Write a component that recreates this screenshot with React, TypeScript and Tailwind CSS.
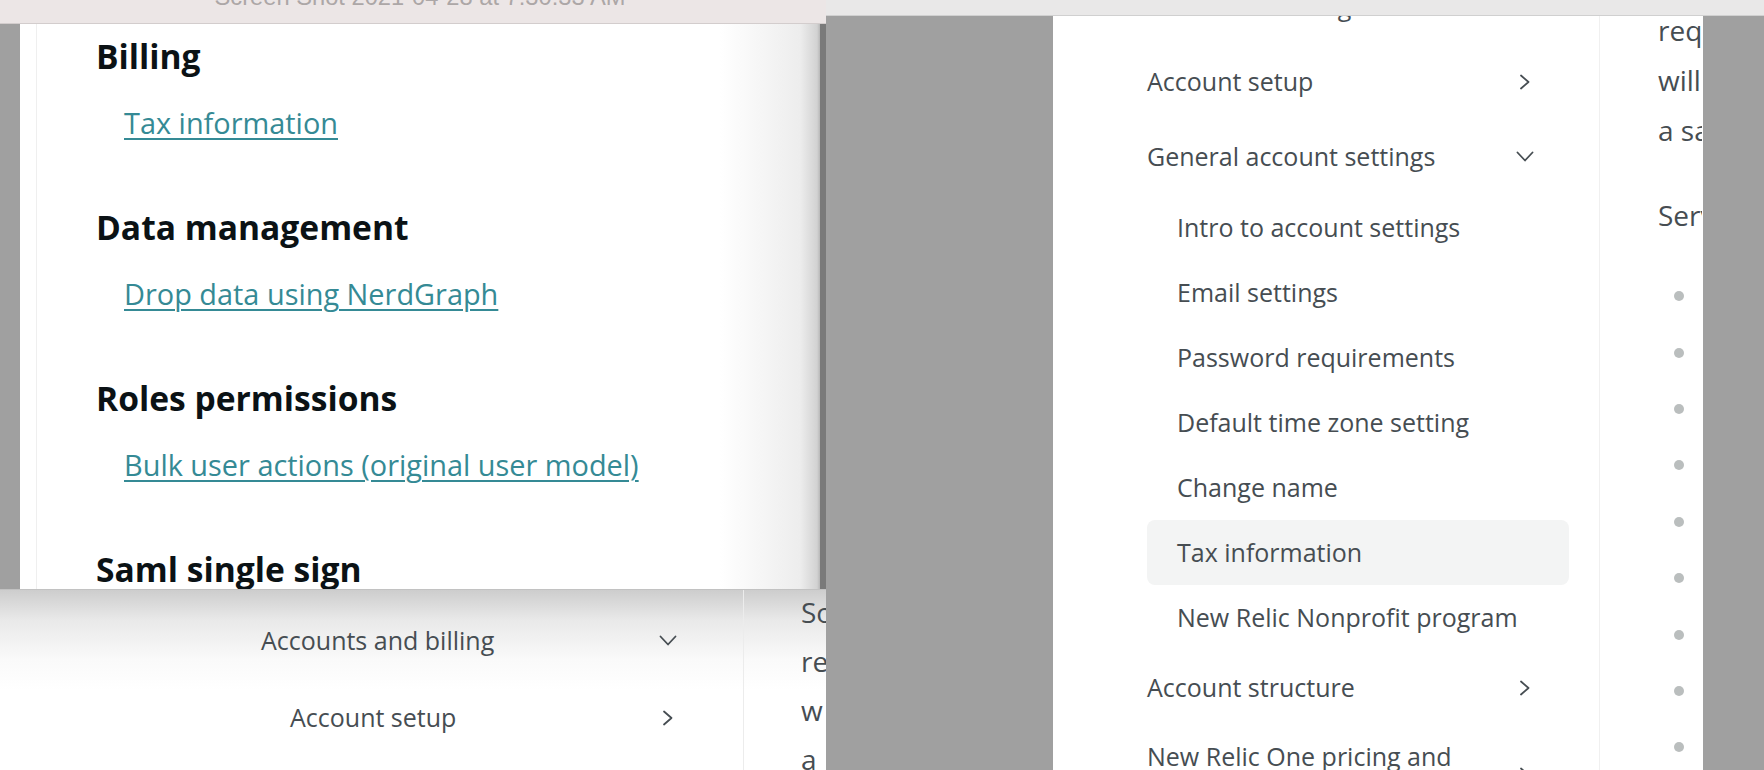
import React from "react";

const navText = "text-[25px] text-[#464d52]";
const bodyText = "text-[28px] text-[#464d52]";

function ChevronRight() {
  return (
    <svg width="12" height="16" viewBox="0 0 12 16" fill="none">
      <polyline points="2,1.5 9.5,8 2,14.5" stroke="#464d52" strokeWidth="1.8" strokeLinecap="round" strokeLinejoin="round" />
    </svg>
  );
}

function ChevronDown() {
  return (
    <svg width="18" height="11" viewBox="0 0 18 11" fill="none">
      <polyline points="1.5,1.5 9,9.5 16.5,1.5" stroke="#464d52" strokeWidth="1.8" strokeLinecap="round" strokeLinejoin="round" />
    </svg>
  );
}

function TopRow({ label, open, h = "h-[75px]" }: { label: string; open?: boolean; h?: string }) {
  return (
    <div className={`${h} flex items-center justify-between`}>
      <span className={`${navText} whitespace-nowrap`}>{label}</span>
      <span className="w-[18px] mr-[35px] flex justify-center">{open ? <ChevronDown /> : <ChevronRight />}</span>
    </div>
  );
}

function SubRow({ label, active }: { label: string; active?: boolean }) {
  return (
    <div className={`h-[65px] flex items-center pl-[30px] rounded-[8px] ${active ? "bg-[#f3f4f4]" : ""}`}>
      <span className={`${navText} whitespace-nowrap`}>{label}</span>
    </div>
  );
}

function Heading({ children, first }: { children: React.ReactNode; first?: boolean }) {
  return (
    <div className={`${first ? "" : "mt-[62px]"} text-[33.6px] leading-[44px] font-bold text-[#0b1215] whitespace-nowrap`}>{children}</div>
  );
}

function DocLink({ children }: { children: React.ReactNode }) {
  return (
    <div className="mt-[25px] pl-[28px] text-[28.9px] leading-[40px] whitespace-nowrap">
      <span className="text-[#358a95] underline decoration-[1.5px] underline-offset-[4px]">{children}</span>
    </div>
  );
}

export default function App() {
  const bullets = Array.from({ length: 9 });
  return (
    <div className="w-[1764px] h-[770px] flex bg-[#a0a0a0] overflow-hidden font-['Open_Sans',sans-serif]">
      {/* Left column */}
      <div className="w-[826px] h-full flex flex-col">
        {/* Left window */}
        <div className="h-[590px] flex flex-col border-b border-[#c2c2c2]">
          <div className="h-[24px] shrink-0 bg-[#ece6e6] border-b border-[#d3cdcd] overflow-hidden flex justify-center pl-[14px]">
            <div className="-mt-[15px] text-[23.7px] leading-[24px] text-[#aca7a7] font-['Liberation_Sans',Arial,sans-serif] whitespace-nowrap">
              Screen Shot 2021-04-28 at 7:30:33 AM
            </div>
          </div>
          <div className="flex-1 flex min-h-0">
            <div className="w-[20px] bg-[#a0a0a0]" />
            <div className="w-[800px] h-full bg-[linear-gradient(to_right,#ffffff_0px,#ffffff_700px,#ededed_780px,#d2d2d2_797px,#b8b8b8_800px)] overflow-hidden">
              <div className="ml-[16px] h-full border-l border-[#efefef] pl-[59px] pt-[10px]">
                <Heading first>Billing</Heading>
                <DocLink>Tax information</DocLink>
                <Heading>Data management</Heading>
                <DocLink>Drop data using NerdGraph</DocLink>
                <Heading>Roles permissions</Heading>
                <DocLink>Bulk user actions (original user model)</DocLink>
                <Heading>Saml single sign</Heading>
              </div>
            </div>
            <div className="w-[6px] bg-[#7a7a7a]" />
          </div>
        </div>
        {/* Page fragment below left window */}
        <div className="flex-1 flex bg-[linear-gradient(to_bottom,#cdcdcd_0px,#e9e9e9_30px,#fafafa_70px,#ffffff_100px)] overflow-hidden">
          <div className="w-[744px] border-r border-[#ececec] pl-[261px] pr-[31px] pt-[12px]">
            <TopRow label="Accounts and billing" open h="h-[77px]" />
            <div className="pl-[29px]">
              <TopRow label="Account setup" h="h-[77px]" />
            </div>
          </div>
          <div className="flex-1 pl-[57px] -mt-[2px] overflow-hidden">
            {["So", "re", "w", "a"].map((t) => (
              <div key={t} className={`${bodyText} leading-[49px] whitespace-nowrap`}>{t}</div>
            ))}
          </div>
        </div>
      </div>

      {/* Right window */}
      <div className="flex-1 h-full flex flex-col">
        <div className="h-[16px] shrink-0 bg-[#e9e8e8] border-b border-[#d0d0d0]" />
        <div className="flex-1 flex min-h-0">
          <div className="w-[227px] bg-[#a0a0a0]" />
          <div className="w-[650px] h-full bg-white flex overflow-hidden">
            <div className="w-[547px] h-full overflow-hidden pl-[65px] pr-[30px] border-r border-[#f0f0f0]">
              <div className="-mt-[47px]">
                <TopRow label="Accounts and billing" open />
                <div className="pl-[29px]">
                  <TopRow label="Account setup" />
                  <TopRow label="General account settings" open />
                  <div className="mt-[1px]">
                    <SubRow label="Intro to account settings" />
                    <SubRow label="Email settings" />
                    <SubRow label="Password requirements" />
                    <SubRow label="Default time zone setting" />
                    <SubRow label="Change name" />
                    <SubRow label="Tax information" active />
                    <SubRow label="New Relic Nonprofit program" />
                  </div>
                  <TopRow label="Account structure" />
                  <div className="h-[90px] flex items-start justify-between pt-[14px]">
                    <span className={`${navText} leading-[34px]`}>New Relic One pricing and<br />billing</span>
                    <span className="w-[18px] mr-[35px] mt-[28px] flex justify-center"><ChevronRight /></span>
                  </div>
                </div>
              </div>
            </div>
            <div className="w-[102px] h-full overflow-hidden pl-[58px]">
              <div className="-mt-[11px]">
                {["requirements", "will be applied", "a saved"].map((t) => (
                  <div key={t} className={`${bodyText} leading-[50px] whitespace-nowrap`}>{t}</div>
                ))}
                <div className={`${bodyText} leading-[50px] mt-[35px] whitespace-nowrap`}>Services</div>
                <div className="mt-[28px] -ml-[58px] pl-[74px]">
                  {bullets.map((_, i) => (
                    <div key={i} className="h-[56.4px] flex items-center">
                      <span className="w-[10px] h-[10px] rounded-full bg-[#babebe]" />
                    </div>
                  ))}
                </div>
              </div>
            </div>
          </div>
          <div className="flex-1 bg-[#a0a0a0]" />
        </div>
      </div>
    </div>
  );
}
